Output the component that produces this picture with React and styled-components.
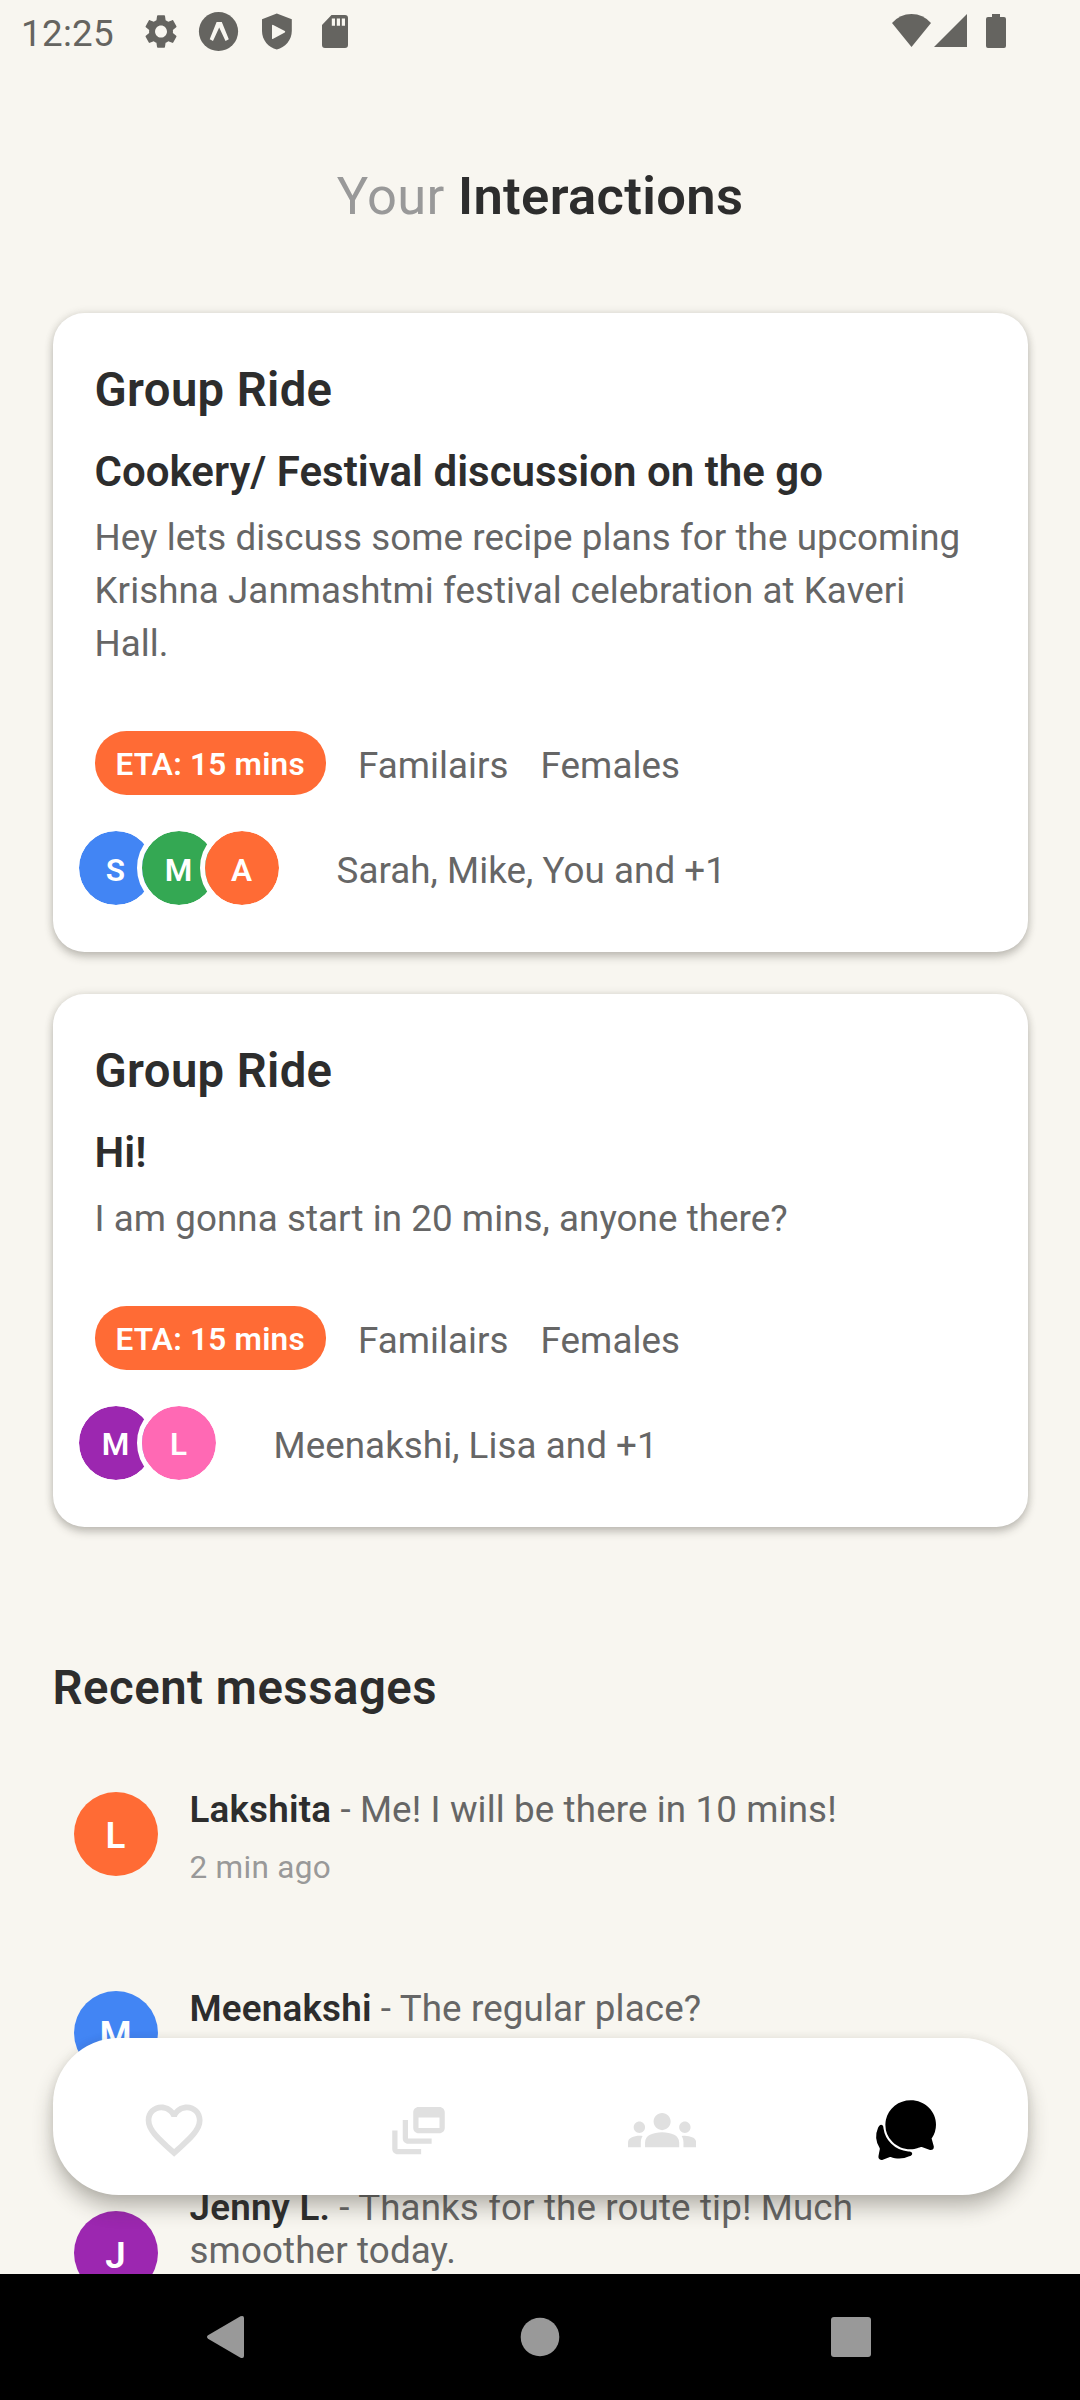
import React from "react";
import styled, { createGlobalStyle } from "styled-components";
import { IoChatbubbles } from "react-icons/io5";
import { MdGroups, MdOutlineDynamicFeed, MdFavoriteBorder } from "react-icons/md";

const GlobalStyle = createGlobalStyle`
  *, *::before, *::after { box-sizing: border-box; }
  html, body { margin: 0; padding: 0; background: #f8f6f0; }
  body { font-family: Roboto, "Noto Sans", sans-serif; letter-spacing: 0.06px; overflow: hidden; }
  h1, h2, h3, p { margin: 0; font-weight: inherit; }
  svg { display: block; }
`;

const Screen = styled.div`
  position: relative;
  display: flex;
  flex-direction: column;
  width: 1080px;
  height: 2400px;
  overflow: hidden;
  background: #f8f6f0;
`;

const StatusBar = styled.header`
  display: flex;
  align-items: center;
  justify-content: space-between;
  height: 63px;
  flex: none;
  padding: 0 72px 0 21px;
  color: #656460;
`;

const StatusGroup = styled.div`
  display: flex;
  align-items: center;
`;

const Clock = styled.span`
  width: 111px;
  margin-top: 4px;
  font-size: 36.75px;
  line-height: 43px;
  letter-spacing: 0.3px;
`;

const StatusIcon = styled.svg`
  width: ${(p) => p.$w}px;
  height: 48px;
  fill: currentColor;
`;

const Content = styled.main`
  display: flex;
  flex-direction: column;
  flex: none;
  height: 2211px;
  padding: 0 52.5px;
  overflow: hidden;
`;

const PageTitle = styled.h1`
  margin-top: 102px;
  text-align: center;
  font-size: 52.5px;
  line-height: 62px;
  letter-spacing: 0.34px;
  color: #999999;
  strong { font-weight: 600; color: #2d2d2d; }
`;

const Cards = styled.section`
  display: flex;
  flex-direction: column;
  gap: 42px;
  margin-top: 86px;
`;

const Card = styled.article`
  padding: 42px;
  height: ${(p) => p.$height}px;
  border-radius: 31.5px;
  background: #ffffff;
  box-shadow: 0 5px 8px rgba(50, 48, 38, 0.25), 0 0 8px rgba(50, 48, 38, 0.13);
`;

const CardHeading = styled.h2`
  margin-top: 7px;
  font-size: 47.25px;
  line-height: 56px;
  font-weight: 600;
  letter-spacing: 0.36px;
  color: #2d2d2d;
`;

const CardTitle = styled.h3`
  margin-top: 29px;
  font-size: 42px;
  line-height: 50px;
  font-weight: 600;
  letter-spacing: 0.02px;
  color: #2d2d2d;
`;

const CardText = styled.p`
  margin-top: 14px;
  padding-right: 10px;
  font-size: 36.75px;
  line-height: 53px;
  color: #666666;
`;

const TagRow = styled.div`
  display: flex;
  align-items: center;
  gap: 32px;
  height: 64px;
  margin-top: 61px;
  font-size: 36.75px;
  line-height: 43px;
  color: #666666;
`;

const Eta = styled.span`
  height: 64px;
  padding: 3px 21px 0;
  border-radius: 31.5px;
  background: #ff6b35;
  color: #ffffff;
  font-size: 31.5px;
  line-height: 62px;
  font-weight: 600;
  letter-spacing: 0.24px;
`;

const Tag = styled.span`
  padding-top: 5px;
`;

const PeopleRow = styled.div`
  display: flex;
  align-items: center;
  height: 84px;
  margin-top: 31px;
`;

const SmallAvatar = styled.span`
  display: flex;
  align-items: center;
  justify-content: center;
  width: 84px;
  height: 84px;
  margin-left: -21px;
  padding-top: 4px;
  border: 5.25px solid #ffffff;
  border-radius: 50%;
  background: ${(p) => p.$color};
  background-clip: padding-box;
  color: #ffffff;
  font-size: 31.5px;
  font-weight: 600;
`;

const PeopleNames = styled.span`
  margin-left: 53px;
  padding-top: 5px;
  font-size: 36.75px;
  line-height: 43px;
  color: #666666;
`;

const SectionTitle = styled.h2`
  margin-top: 133px;
  font-size: 47.25px;
  line-height: 56px;
  font-weight: 600;
  letter-spacing: 0.54px;
  color: #2d2d2d;
`;

const Messages = styled.section`
  display: flex;
  flex-direction: column;
  gap: 101px;
  margin-top: 72px;
  padding: 0 21px;
`;

const Message = styled.article`
  display: flex;
  align-items: center;
  gap: 32px;
`;

const Avatar = styled.span`
  display: flex;
  align-items: center;
  justify-content: center;
  flex: none;
  width: 84px;
  height: 84px;
  margin-bottom: 6px;
  padding-top: 4px;
  border-radius: 50%;
  background: ${(p) => p.$color};
  color: #ffffff;
  font-size: 36.75px;
  font-weight: 600;
`;

const MessageBody = styled.div`
  flex: 1;
  padding-right: 21px;
`;

const MessageText = styled.p`
  font-size: 36.75px;
  line-height: 43px;
  letter-spacing: 0.12px;
  color: #666666;
  strong { font-weight: 600; color: #2d2d2d; letter-spacing: 0.2px; }
`;

const MessageTime = styled.p`
  margin-top: 18px;
  font-size: 31.5px;
  line-height: 37px;
  letter-spacing: 0.3px;
  color: #999999;
`;

const TabBar = styled.nav`
  position: absolute;
  left: 52.5px;
  right: 52.5px;
  bottom: 205px;
  display: grid;
  grid-template-columns: repeat(4, 1fr);
  height: 157.5px;
  padding-top: 28px;
  border-radius: 65.6px;
  background: #ffffff;
  box-shadow: 0 13px 20px rgba(50, 48, 38, 0.3), 0 1px 10px rgba(50, 48, 38, 0.1);
`;

const Tab = styled.span`
  display: flex;
  align-items: center;
  justify-content: center;
  color: ${(p) => (p.$active ? "#000000" : "#e0e0e0")};
  svg { width: ${(p) => p.$size}px; height: ${(p) => p.$size}px; }
`;

const SystemBar = styled.footer`
  display: flex;
  flex: none;
  align-items: center;
  justify-content: center;
  height: 126px;
  background: #000000;
  svg { fill: #999999; }
`;

const SystemButton = styled.svg`
  width: 60px;
  height: 60px;
`;

const SystemButtons = styled.div`
  display: flex;
  gap: 251px;
`;

const cards = [
  {
    height: 638.7,
    title: "Cookery/ Festival discussion on the go",
    text: "Hey lets discuss some recipe plans for the upcoming Krishna Janmashtmi festival celebration at Kaveri Hall.",
    people: [["S", "#4285f4"], ["M", "#34a853"], ["A", "#ff6b35"]],
    names: "Sarah, Mike, You and +1",
  },
  {
    height: 533.2,
    title: "Hi!",
    text: "I am gonna start in 20 mins, anyone there?",
    people: [["M", "#9c27b0"], ["L", "#ff69b4"]],
    names: "Meenakshi, Lisa and +1",
  },
];

const messages = [
  { name: "Lakshita", text: "Me! I will be there in 10 mins!", time: "2 min ago", color: "#ff6b35" },
  { name: "Meenakshi", text: "The regular place?", time: "5 min ago", color: "#4285f4" },
  { name: "Jenny L.", text: "Thanks for the route tip! Much smoother today.", time: "1 hr ago", color: "#9c27b0" },
];

export default function App() {
  return (
    <Screen>
      <GlobalStyle />
      <StatusBar>
        <StatusGroup>
          <Clock>12:25</Clock>
          <StatusIcon $w={58} viewBox="132 8 58 48">
            <path
              transform="translate(141.1 11.1) scale(1.66 1.7)"
              d="M19.14 12.94c.04-.3.06-.61.06-.94 0-.32-.02-.64-.07-.94l2.03-1.58c.18-.14.23-.41.12-.61l-1.92-3.32c-.12-.22-.37-.29-.59-.22l-2.39.96c-.5-.38-1.03-.7-1.62-.94l-.36-2.54c-.04-.24-.24-.41-.48-.41h-3.84c-.24 0-.43.17-.47.41l-.36 2.54c-.59.24-1.13.57-1.62.94l-2.39-.96c-.22-.08-.47 0-.59.22L2.74 8.87c-.12.21-.08.47.12.61l2.03 1.58c-.05.3-.09.63-.09.94s.02.64.07.94l-2.03 1.58c-.18.14-.23.41-.12.61l1.92 3.32c.12.22.37.29.59.22l2.39-.96c.5.38 1.03.7 1.62.94l.36 2.54c.05.24.24.41.48.41h3.84c.24 0 .44-.17.47-.41l.36-2.54c.59-.24 1.13-.56 1.62-.94l2.39.96c.22.08.47 0 .59-.22l1.92-3.32c.12-.22.07-.47-.12-.61l-2.01-1.58zM12 15.6c-1.98 0-3.6-1.62-3.6-3.6s1.62-3.6 3.6-3.6 3.6 1.62 3.6 3.6-1.62 3.6-3.6 3.6z"
            />
          </StatusIcon>
          <StatusIcon $w={58} viewBox="190 8 58 48">
            <circle cx="218.5" cy="31.5" r="19.6" />
            <path d="M216.6 22H221.800L228.800 39.200L225.500 41L219.200 27.500L213 41L209.700 39.200Z" fill="#f8f6f0" />
          </StatusIcon>
          <StatusIcon $w={58} viewBox="248 8 58 48">
            <path fillRule="evenodd" d="M276.800 13.500L291.800 19.200V31C291.800 40 285 47.500 276.800 49.600C268.500 47.500 262 40 262 31V19.200ZM272 25.200V38.400Q272.300 39.300 273.200 38.800L284.800 32.500Q285.700 31.800 284.800 31.100L273.200 24.900Q272.200 24.500 272 25.200Z" />
          </StatusIcon>
          <StatusIcon $w={58} viewBox="306 8 58 48">
            <path fillRule="evenodd" d="M331.500 15H345Q348 15 348 18V45Q348 48 345 48H325Q322 48 322 45V25ZM331.800 18.500V25.800H335V18.500ZM336.800 18.500V25.800H340V18.500ZM341.800 18.500V25.800H345V18.500Z" />
          </StatusIcon>
        </StatusGroup>
        <StatusGroup>
          <StatusIcon $w={128} viewBox="880 8 128 48">
            <path d="M892 23Q900 14 911.500 14T931 23L911.500 47Z" />
            <path d="M967 14V47H934Z" />
            <path d="M992 14H1000V17H1004Q1006 17 1006 19V46Q1006 48 1004 48H988Q986 48 986 46V19Q986 17 988 17H992Z" />
          </StatusIcon>
        </StatusGroup>
      </StatusBar>

      <Content>
        <PageTitle>Your <strong>Interactions</strong></PageTitle>
        <Cards>
          {cards.map((card) => (
            <Card key={card.title} $height={card.height}>
              <CardHeading>Group Ride</CardHeading>
              <CardTitle>{card.title}</CardTitle>
              <CardText>{card.text}</CardText>
              <TagRow>
                <Eta>ETA: 15 mins</Eta>
                <Tag>Familairs</Tag>
                <Tag>Females</Tag>
              </TagRow>
              <PeopleRow>
                {card.people.map(([initial, color]) => (
                  <SmallAvatar key={initial} $color={color}>{initial}</SmallAvatar>
                ))}
                <PeopleNames>{card.names}</PeopleNames>
              </PeopleRow>
            </Card>
          ))}
        </Cards>

        <SectionTitle>Recent messages</SectionTitle>
        <Messages>
          {messages.map((m) => (
            <Message key={m.name}>
              <Avatar $color={m.color}>{m.name[0]}</Avatar>
              <MessageBody>
                <MessageText><strong>{m.name}</strong> - {m.text}</MessageText>
                <MessageTime>{m.time}</MessageTime>
              </MessageBody>
            </Message>
          ))}
        </Messages>
      </Content>

      <TabBar>
        <Tab $size={68.25}><MdFavoriteBorder /></Tab>
        <Tab $size={63}><MdOutlineDynamicFeed /></Tab>
        <Tab $size={68.25}><MdGroups /></Tab>
        <Tab $size={68.25} $active><IoChatbubbles /></Tab>
      </TabBar>

      <SystemBar>
        <SystemButtons>
          <SystemButton viewBox="0 0 60 60">
            <path d="M9 28.300L41.500 9.300Q45 8 45 11V49Q45 52 41.500 50.700L9 31.700Q7 30 9 28.300Z" />
          </SystemButton>
          <SystemButton viewBox="0 0 60 60"><circle cx="30" cy="30" r="19.300" /></SystemButton>
          <SystemButton viewBox="0 0 60 60"><rect x="10" y="10" width="40" height="40" rx="3" /></SystemButton>
        </SystemButtons>
      </SystemBar>
    </Screen>
  );
}
